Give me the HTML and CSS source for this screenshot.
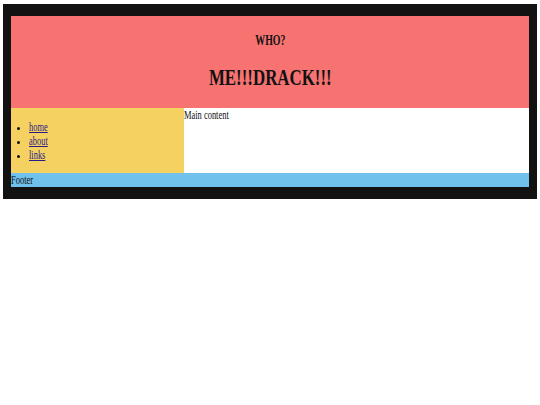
FILE: index.html
```html
<!DOCTYPE html>
<html>
<head>
<meta charset="utf-8">
<link rel="stylesheet" href="styles.css">
</head>
<body>
<div class="page">
  <header class="header">
    <h3 class="who"><span class="sq">WHO?</span></h3>
    <h1 class="title"><span class="sq">ME!!!DRACK!!!</span></h1>
  </header>
  <div class="row">
    <nav class="side">
      <ul class="nav">
        <li><a class="sq link" href="#">home</a></li>
        <li><a class="sq link" href="#">about</a></li>
        <li><a class="sq link" href="#">links</a></li>
      </ul>
    </nav>
    <main class="main"><span class="sq">Main content</span></main>
  </div>
  <footer class="footer"><span class="sq">Footer</span></footer>
</div>
</body>
</html>
```
FILE: styles.css
```css
html, body {
  margin: 0;
  padding: 0;
  background: #ffffff;
}
body {
  font-family: "Liberation Serif", "Times New Roman", serif;
  font-size: 12px;
  line-height: 14px;
  color: #111111;
}
.page {
  margin: 4px 3px 0;
  border-style: solid;
  border-color: #121212;
  border-width: 12px 8px;
}
.sq {
  display: inline-block;
  transform: scaleX(0.703);
  transform-origin: 0 50%;
}
.header {
  display: flow-root;
  background: #f77372;
  text-align: center;
}
.header .sq {
  transform-origin: 50% 50%;
}
.who {
  margin: 17px 0 0;
  font-size: 14px;
  line-height: 16px;
  font-weight: bold;
}
.title {
  margin: 15px 0 17px;
  font-size: 24px;
  line-height: 27px;
  font-weight: bold;
}
.row {
  display: grid;
  grid-template-columns: 173px 1fr;
}
.side {
  background: #f4d160;
  display: flow-root;
}
.nav {
  margin: 12px 0 11px;
  padding-left: 18px;
}
.nav li::marker {
  font-size: 9px;
}
.link {
  color: #2a1a8a;
  text-decoration: underline;
}
.main {
  background: #ffffff;
}
.footer {
  background: #70c1ec;
  height: 14px;
}
```
